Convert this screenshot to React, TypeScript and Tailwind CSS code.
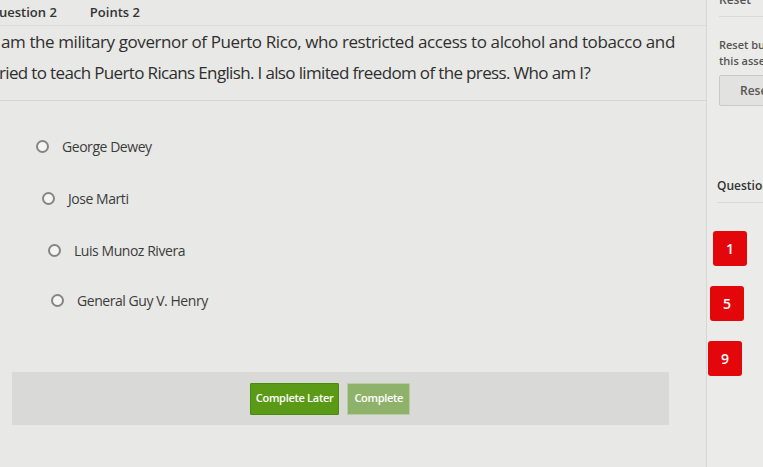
import { useState } from 'react';

const options = [
    { label: 'George Dewey', pad: 'pl-[36px]', mt: 'mt-0' },
    { label: 'Jose Marti', pad: 'pl-[42px]', mt: 'mt-[32px]' },
    { label: 'Luis Munoz Rivera', pad: 'pl-[48px]', mt: 'mt-[32px]' },
    { label: 'General Guy V. Henry', pad: 'pl-[51px]', mt: 'mt-[30px]' },
];

const flagged = ['1', '5', '9'];
const badgeShift = ['ml-[-6px]', 'ml-[-9px]', 'ml-[-11px]'];

const App = () => {
    const [picked, setPicked] = useState<number | null>(null);

    return (
        <div
            className="flex h-[467px] w-[763px] overflow-hidden bg-[#e8e8e6] text-[#3a3a3a]"
            style={{ fontFamily: '"Open Sans", "Noto Sans", sans-serif' }}
        >
            {/* question column */}
            <div className="flex w-[706px] shrink-0 flex-col">
                <div className="flex h-[26px] items-center gap-[33px] border-b border-[#dcdcda] pt-[1px] text-[13px] font-semibold text-[#333]">
                    <span className="-ml-[1px]">uestion 2</span>
                    <span>Points 2</span>
                </div>

                <div className="border-b border-[#d6d6d4] pb-[12px] text-[17px] leading-[31px] text-[#2f2f2f]">
                    <p className="ml-[1px] whitespace-nowrap tracking-[-0.4px]">am the military governor of Puerto Rico, who restricted access to alcohol and tobacco and</p>
                    <p className="-ml-[1px] whitespace-nowrap tracking-[-0.65px]">ried to teach Puerto Ricans English. I also limited freedom of the press. Who am I?</p>
                </div>

                <div className="flex flex-col pt-[35px]">
                    {options.map((o, i) => (
                        <label
                            key={o.label}
                            className={`flex h-[20px] cursor-pointer items-center gap-[13px] ${o.pad} ${o.mt}`}
                            onClick={() => setPicked(i)}
                        >
                            <span className="flex h-[13px] w-[13px] items-center justify-center rounded-full border-[2px] border-[#858585] bg-[#f4f4f2]">
                                {picked === i && <span className="h-[5px] w-[5px] rounded-full bg-[#555]" />}
                            </span>
                            <span className="text-[14px] tracking-[-0.45px] text-[#3c3c3c]">{o.label}</span>
                        </label>
                    ))}
                </div>

                <div className="ml-[12px] mr-[37px] mt-[62px] flex h-[53px] items-center justify-center gap-[8px] bg-[#d9d9d7] pr-[21px]">
                    <button className="h-[32px] rounded-[1px] border border-[#4d8a10] bg-[#5b9a16] px-[5px] text-[11px] font-semibold tracking-[-0.3px] text-white">
                        Complete Later
                    </button>
                    <button className="h-[32px] rounded-[1px] border border-[#b9cca3] bg-[#8fb26a] px-[6px] text-[11px] font-semibold tracking-[-0.3px] text-white">
                        Complete
                    </button>
                </div>
            </div>

            {/* side panel */}
            <div className="flex flex-1 flex-col border-l border-[#d7d7d5] bg-[#ebebe9] pl-[12px]">
                <div className="-mt-[9px] h-[26px] border-b border-[#dadad8] text-[12px] font-semibold text-[#555]">Reset</div>
                <div className="mt-[20px] text-[11px] font-semibold leading-[16px] text-[#555]">
                    <p className="whitespace-nowrap">Reset button clears</p>
                    <p className="whitespace-nowrap">this assessment</p>
                </div>
                <div className="mt-[6px] flex h-[31px] items-center rounded-[2px] border border-[#c9c9c7] bg-[#e2e2e0] pl-[20px] text-[12px] font-semibold text-[#555]">
                    <span className="whitespace-nowrap">Reset</span>
                </div>
                <div className="mt-[71px] -ml-[2px] h-[26px] border-b border-[#d9d9d7] text-[12px] font-semibold text-[#333]">
                    <span className="whitespace-nowrap">Questions</span>
                </div>
                <div className="mt-[28px] flex flex-col gap-[20px]">
                    {flagged.map((n, i) => (
                        <div
                            key={n}
                            className={`flex h-[35px] w-[34px] items-center justify-center rounded-[3px] bg-[#e3070b] text-[14px] font-semibold text-white ${badgeShift[i]}`}
                        >
                            {n}
                        </div>
                    ))}
                </div>
            </div>
        </div>
    );
};

export default App;
